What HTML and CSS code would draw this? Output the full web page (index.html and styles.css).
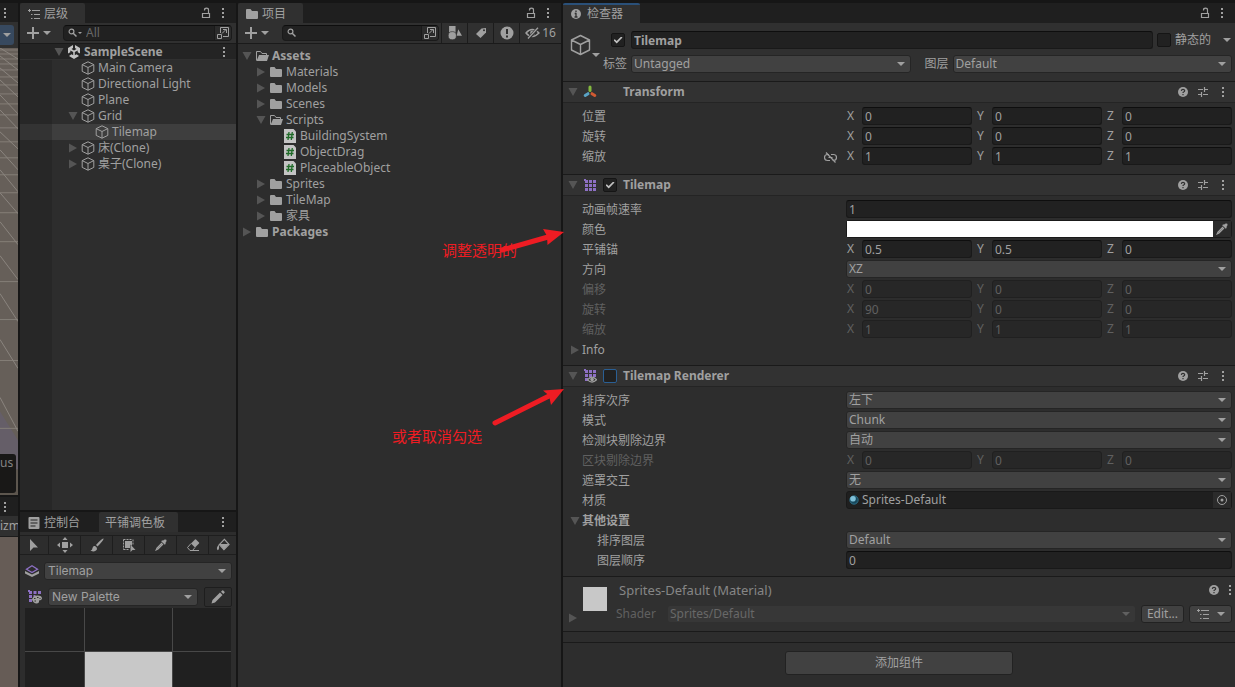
FILE: index.html
```html
<!DOCTYPE html>
<html lang="zh-CN">
<head>
<meta charset="utf-8">
<title>SampleScene</title>
<link rel="stylesheet" href="styles.css">
</head>
<body>
<svg class="defs" aria-hidden="true">
  <symbol id="kebab" viewBox="0 0 4 12"><path d="M1 1h2v2H1zM1 5h2v2H1zM1 9h2v2H1z" fill="currentColor"/></symbol>
  <symbol id="lock" viewBox="0 0 10 12"><path d="M1.5 6.5h7v4h-7zM3.500 3.500V3a2 1.800 0 0 1 4 0v3.500" fill="none" stroke="currentColor" stroke-width="1.200"/></symbol>
  <symbol id="list" viewBox="0 0 12 12"><path d="M4 2.500h8M6 6.500h6M6 10.500h6M3 6.500h1.500M3 10.500h1.500M0 2.500h3M1.500 1v3" fill="none" stroke="currentColor"/></symbol>
  <symbol id="down" viewBox="0 0 8 4"><path d="M0 0h8L4 4z" fill="currentColor"/></symbol>
  <symbol id="open" viewBox="0 0 10 10"><path d="M.5 1h9L5 9z" fill="#555"/></symbol>
  <symbol id="shut" viewBox="0 0 10 10"><path d="M1 .5v9L9 5z" fill="#555"/></symbol>
  <symbol id="plus" viewBox="0 0 12 12"><path d="M6 0v12M0 6h12" stroke="currentColor" stroke-width="2"/></symbol>
  <symbol id="search" viewBox="0 0 10 10"><circle cx="3.500" cy="3.500" r="2.400" fill="none" stroke="currentColor" stroke-width="1.200"/><path d="M5.200 5.200 8.500 8.500" stroke="currentColor" stroke-width="1.500"/></symbol>
  <symbol id="goto" viewBox="0 0 13 13"><path d="M3.500 7V1.500h8v9H6M.5 8.500h4v4h-4zM5 7.500l4-4M6 3.500h3.500V7" fill="none" stroke="currentColor"/></symbol>
  <symbol id="cube" viewBox="0 0 14 14"><path d="M7 .8 12.800 3.600v6.800L7 13.200 1.200 10.400V3.600zM1.200 3.600 7 6.500l5.800-2.900M7 6.500v6.700" fill="none" stroke="currentColor" stroke-linejoin="round"/></symbol>
  <symbol id="cube-big" viewBox="0 0 24 24"><path d="M11.500 2.500 20.500 7v10l-9 4.500L2.500 17V7zM2.500 7l9 4.500 9-4.500M11.500 11.500v10" fill="none" stroke="currentColor" stroke-width="1.400" stroke-linejoin="round"/></symbol>
  <symbol id="unity" viewBox="0 0 14 14"><path d="M6 0v3L4.500 4 7 5.500 9.500 4 8 3V0l5 3v5.500l-2.300-1.300V5.500L7.800 7v3.200l1.700-1L12 11l-5 3-5-3 2.500-1.800 1.700 1V7L3.300 5.500v1.700L1 8.500V3z" fill="#c4c4c4"/></symbol>
  <symbol id="folder" viewBox="0 0 14 14"><path d="M1 3q0-1 1-1h3.500l1.500 2h5q1 0 1 1v6q0 1-1 1H2q-1 0-1-1z" fill="currentColor"/></symbol>
  <symbol id="folder-open" viewBox="0 0 14 14"><path d="M1.500 11.500v-9h4l1.500 2h4.500V6" fill="none" stroke="currentColor"/><path d="M4 6h10l-2 6H1.500z" fill="currentColor"/></symbol>
  <symbol id="script" viewBox="0 0 14 14"><path d="M1 0h9.500L13 2.500V14H1z" fill="#c4c4c4"/><path d="M6 3 5 11M9.300 3l-1 8M3.500 5.500h7.500M3 8.500h7.500" stroke="#1f6b28" stroke-width="1.300"/></symbol>
  <symbol id="shapes" viewBox="0 0 13 13"><path d="M1 0h6v6H1zM9.500 3l3.500 6H8z" fill="currentColor"/><circle cx="4" cy="9" r="3.800" fill="currentColor" stroke="#2f2f2f" stroke-width=".6"/></symbol>
  <symbol id="tag" viewBox="0 0 12 12"><path d="M1 7 6.500 1.500 11 1v4.500L5.500 11z" fill="currentColor"/><circle cx="9" cy="3.300" r="1" fill="#2f2f2f"/></symbol>
  <symbol id="alert" viewBox="0 0 14 14"><circle cx="7" cy="7" r="6.500" fill="currentColor"/><path d="M7 3v5M7 9.500v2" stroke="#2f2f2f" stroke-width="2"/></symbol>
  <symbol id="eye-off" viewBox="0 0 15 12"><path d="M1 6q6-7 13 0-7 7-13 0z" fill="none" stroke="currentColor" stroke-width="1.400"/><circle cx="7.500" cy="6" r="2.400" fill="currentColor"/><path d="M3 12 13 1" stroke="#2f2f2f" stroke-width="3"/><path d="M3 11.500 13 .8" stroke="currentColor" stroke-width="1.300"/></symbol>
  <symbol id="info" viewBox="0 0 10 10"><circle cx="5" cy="5" r="5" fill="currentColor"/><path d="M5 1.500v1.700M5 4v4M3.700 4.500H5M3.500 8h3" stroke="#303030" stroke-width="1.300"/></symbol>
  <symbol id="help" viewBox="0 0 10 10"><circle cx="5" cy="5" r="5" fill="currentColor"/><path d="M3.300 3.900Q3.500 2.300 5 2.300T6.700 3.700Q6.700 4.500 5.600 5 5 5.300 5 6M5 7v1.300" fill="none" stroke="#303030" stroke-width="1.200"/></symbol>
  <symbol id="sliders" viewBox="0 0 10 10"><path d="M0 2.500h5M7 2.500h3M0 7.500h3M5 7.500h5M6.500 0v5M3.500 5v5" fill="none" stroke="currentColor" stroke-width="1.200"/></symbol>
  <symbol id="transform" viewBox="0 0 14 14"><g stroke-width="3" stroke-linecap="round"><path d="M7 2v3.500" stroke="#84b93f"/><path d="M5 8.700 2.200 10.500" stroke="#5aa3c4"/><path d="m9 8.700 2.800 1.800" stroke="#d05a32"/></g></symbol>
  <symbol id="tiles" viewBox="0 0 14 14"><path d="M2 2h3v3H2zM6 2h3v3H6zM10 2h3v3h-3zM2 6h3v3H2zM6 6h3v3H6zM10 6h3v3h-3zM2 10h3v3H2zM6 10h3v3H6zM10 10h3v3h-3zM1 1h2v2H1z" fill="#8d70c4"/></symbol>
  <symbol id="tiles-eye" viewBox="0 0 14 14"><path d="M2 1h3v3H2zM6 1h3v3H6zM10 1h3v3h-3zM2 5h3v3H2zM6 5h3v3H6zM10 5h3v3h-3zM2 9h3v3H2zM1 0h2v2H1z" fill="#8d70c4"/><path d="M4.500 10.800q4.500-5.500 9.200 0-4.700 4.500-9.200 0z" fill="#303030" stroke="#a0a0a0" stroke-width="1.200"/><circle cx="9.100" cy="10.600" r="1.800" fill="#a0a0a0"/></symbol>
  <symbol id="tiles-palette" viewBox="0 0 14 14"><path d="M1 1h3v3H1zM5.500 1h3v3h-3zM10 1h3v3h-3zM1 5h3v3H1zM1 9h3v3H1zM5.500 5h2v2h-2zM0 0h2v2H0z" fill="#8d70c4"/><path d="M4 9.500Q5 5.500 9.500 5.500T14 8.800Q13.500 10.500 11 10.500 11.500 13.500 8.500 13.500T4 9.500z" fill="#a0a0a0"/><path d="M6 8.500h1.500M9 7.500h1.500M11.500 8.500h1M6.500 11h1.500" stroke="#303030" stroke-width="1.200"/></symbol>
  <symbol id="unlink" viewBox="0 0 13 11"><path d="M5 2.500H3.500a3 3 0 0 0 0 6H6M7 2.500h2.500a3 3 0 0 1 0 6H8.500M4.500 5.500h4M2 .5 11.500 10.500" fill="none" stroke="currentColor" stroke-width="1.200"/></symbol>
  <symbol id="dropper" viewBox="0 0 12 12"><path d="M8 1.800Q9.500-.2 11.300.8 12 2.500 10.300 4l.5.800-1 .9-3.600-3.500 1-1z" fill="currentColor"/><path d="M7 4 2 9l-.8 1.900L3 10l5-5" fill="none" stroke="currentColor" stroke-width="1.200"/></symbol>
  <symbol id="target" viewBox="0 0 12 12"><circle cx="6" cy="6" r="4.500" fill="none" stroke="currentColor"/><circle cx="6" cy="6" r="1.500" fill="currentColor"/></symbol>
  <symbol id="ball" viewBox="0 0 10 10"><circle cx="5" cy="5" r="4.200" fill="#17485c" stroke="#347a95" stroke-width=".8"/><circle cx="4" cy="3.700" r="2.800" fill="#7fc0d8"/></symbol>
  <symbol id="console" viewBox="0 0 11 12"><path d="M1 0h9q1 0 1 1v10q0 1-1 1H1q-1 0-1-1V1q0-1 1-1z" fill="currentColor"/><path d="M2 3h7M2 6h7M2 9h5" stroke="#222"/></symbol>
  <symbol id="pointer" viewBox="0 0 14 14"><path d="M3 1v12l3.500-3.500H11z" fill="currentColor"/></symbol>
  <symbol id="move" viewBox="0 0 16 16"><path d="M5 5h6v6H5zM8 0l2.500 3h-5zM8 16l2.500-3h-5zM0 8l3-2.500v5zM16 8l-3-2.500v5z" fill="currentColor"/></symbol>
  <symbol id="brush" viewBox="0 0 14 14"><path d="M13.500.5Q12 0 6 7l1.500 1.500Q14 2 13.500.5zM5 8Q3 7.500 2.500 10q0 2-2 2.500 4 2 6-.5Q8 10 5 8z" fill="currentColor"/></symbol>
  <symbol id="box" viewBox="0 0 14 14"><path d="M1.500 1.500h9M1.500 1.500v10M11 1.500v6M1.500 11.500h6" fill="none" stroke="currentColor" stroke-dasharray="2 1"/><path d="M3 3h7v4.500H8V10H3zM8.500 6.500v7.500l2-2h3z" fill="currentColor"/></symbol>
  <symbol id="eraser" viewBox="0 0 14 14"><path d="M5 5.500 9 1.500q.5-.5 1 0L13 4.500q.5.5 0 1L9 9.500z" fill="currentColor"/><path d="m5 5.500-3.500 4L4 12.500h2.500L9 9.500M5 12.500h8" fill="none" stroke="currentColor"/></symbol>
  <symbol id="bucket" viewBox="0 0 15 14"><path d="M3.500 6.500 9 1l5 5.500L8.500 12z" fill="none" stroke="currentColor" stroke-width="1.200"/><path d="M3.500 6h10.500L8.500 12zM3 6.500Q-.5 11 2 12.500 4 12 3 6.500z" fill="currentColor"/></symbol>
  <symbol id="layers" viewBox="0 0 14 12"><path d="M0 6v2.500L7 12l7-3.500V6L7 9.500z" fill="#a0a0a0"/><path d="m7 .8 5.500 3.400L7 7.600 1.500 4.200z" fill="none" stroke="#8d70c4" stroke-width="1.300"/></symbol>
  <symbol id="pencil" viewBox="0 0 14 14"><path d="M.5 13.500 1.500 10 9 2.500 11.500 5 4 12.500zM10 1.700l1.200-1.200q.5-.5 1 0L13.500 1.800q.5.500 0 1L12.300 4z" fill="currentColor"/></symbol>
</svg>

<div class="editor">
  <section class="side" aria-label="Scene">
    <div class="side-tab"><svg class="i-kebab"><use href="#kebab"/></svg></div>
    <div class="side-tools"><button class="side-drop" aria-label="选项"><svg class="i-down"><use href="#down"/></svg></button></div>
    <div class="scene">
      <svg class="scene-art" viewBox="0 0 18 448" preserveAspectRatio="none">
        <path d="M0 364 18 393V448H0z" fill="#655e68"/>
        <path d="M0 422h18v26H0z" fill="#5d564e"/>
        <path d="M0 2h18M0 6h18M0 11h18M0 16h18M0 22h18M0 29h18M0 37h18M0 46h18M0 56h18M0 67h18M0 80h18M0 94h18M0 110h18M0 127h18M0 145h18M0 165h18M0 194h18M0 234h18M0 272h18M0 313h18M0 381h18" stroke="#857e77"/>
        <path d="M0 0 18 11M0 8 18 22M0 20l18 15M0 32l18 17M0 47l18 19M0 62l18 19M0 84l18 17M0 102l18 20M0 122l18 22M0 145l18 21M0 174l18 23M0 208l18 24M0 246l18 28M0 292l18 29M0 350l18 34" stroke="#8b857e"/>
      </svg>
      <div class="scene-tag">us</div>
    </div>
    <div class="side-tab side-tab-low"><svg class="i-kebab"><use href="#kebab"/></svg></div>
    <div class="side-tools side-gizmos">izm</div>
    <div class="game"></div>
  </section>

  <div class="column">
    <section class="panel hierarchy">
      <header class="tabs">
        <h2 class="tab tab-on"><svg class="i12"><use href="#list"/></svg>层级</h2>
        <span class="tabs-end"><svg class="i-lock"><use href="#lock"/></svg><svg class="i-kebab"><use href="#kebab"/></svg></span>
      </header>
      <div class="tools">
        <button class="add" aria-label="创建"><svg class="i12"><use href="#plus"/></svg><svg class="i-down"><use href="#down"/></svg></button>
        <label class="search"><svg class="i10"><use href="#search"/></svg><svg class="i-tiny"><use href="#down"/></svg><input type="text" placeholder="All" aria-label="搜索层级"><span class="goto"><svg class="i-goto"><use href="#goto"/></svg></span></label>
      </div>
      <ul class="tree">
        <li class="node scene-node"><svg class="fold"><use href="#open"/></svg><svg class="icon"><use href="#unity"/></svg>SampleScene<svg class="i-kebab node-end"><use href="#kebab"/></svg></li>
        <li class="node l1"><span class="fold"></span><svg class="icon"><use href="#cube"/></svg>Main Camera</li>
        <li class="node l1"><span class="fold"></span><svg class="icon"><use href="#cube"/></svg>Directional Light</li>
        <li class="node l1"><span class="fold"></span><svg class="icon"><use href="#cube"/></svg>Plane</li>
        <li class="node l1"><svg class="fold"><use href="#open"/></svg><svg class="icon"><use href="#cube"/></svg>Grid</li>
        <li class="node l2 selected"><span class="fold"></span><svg class="icon"><use href="#cube"/></svg>Tilemap</li>
        <li class="node l1"><svg class="fold"><use href="#shut"/></svg><svg class="icon"><use href="#cube"/></svg>床(Clone)</li>
        <li class="node l1"><svg class="fold"><use href="#shut"/></svg><svg class="icon"><use href="#cube"/></svg>桌子(Clone)</li>
      </ul>
    </section>

    <section class="panel palette">
      <header class="tabs">
        <h2 class="tab"><svg class="i12"><use href="#console"/></svg>控制台</h2>
        <h2 class="tab tab-on">平铺调色板</h2>
        <span class="tabs-end"><svg class="i-kebab"><use href="#kebab"/></svg></span>
      </header>
      <div class="brushes">
        <button aria-label="选择"><svg class="i14"><use href="#pointer"/></svg></button>
        <button aria-label="移动"><svg class="i16"><use href="#move"/></svg></button>
        <button aria-label="画笔"><svg class="i14"><use href="#brush"/></svg></button>
        <button aria-label="框选"><svg class="i14"><use href="#box"/></svg></button>
        <button aria-label="拾取"><svg class="i12"><use href="#dropper"/></svg></button>
        <button aria-label="擦除"><svg class="i14"><use href="#eraser"/></svg></button>
        <button aria-label="填充"><svg class="i14"><use href="#bucket"/></svg></button>
      </div>
      <div class="palette-row">
        <svg class="i14"><use href="#layers"/></svg>
        <span class="drop"><select aria-label="活动瓦片地图"><option>Tilemap</option></select></span>
      </div>
      <div class="palette-row palette-pick">
        <svg class="i14"><use href="#tiles-palette"/></svg>
        <span class="drop"><select aria-label="调色板"><option>New Palette</option></select></span>
        <button class="edit-palette" aria-label="编辑"><svg class="i14"><use href="#pencil"/></svg></button>
      </div>
      <div class="cells"><i></i><i></i><i></i><i></i><i class="cell-on"></i><i></i></div>
    </section>
  </div>

  <section class="panel project">
    <header class="tabs">
      <h2 class="tab tab-on"><svg class="i14"><use href="#folder"/></svg>项目</h2>
      <span class="tabs-end"><svg class="i-lock"><use href="#lock"/></svg><svg class="i-kebab"><use href="#kebab"/></svg></span>
    </header>
    <div class="tools">
      <button class="add" aria-label="创建"><svg class="i12"><use href="#plus"/></svg><svg class="i-down"><use href="#down"/></svg></button>
      <label class="search"><svg class="i10"><use href="#search"/></svg><input type="text" aria-label="搜索项目"><span class="goto"><svg class="i-goto"><use href="#goto"/></svg></span></label>
      <button class="tool" aria-label="按类型"><svg class="i14"><use href="#shapes"/></svg></button>
      <button class="tool" aria-label="按标签"><svg class="i12"><use href="#tag"/></svg></button>
      <button class="tool" aria-label="按日志"><svg class="i14"><use href="#alert"/></svg></button>
      <button class="tool tool-wide"><svg class="i-eye"><use href="#eye-off"/></svg>16</button>
    </div>
    <ul class="tree">
      <li class="node bold"><svg class="fold"><use href="#open"/></svg><svg class="icon"><use href="#folder-open"/></svg>Assets</li>
      <li class="node l1"><svg class="fold"><use href="#shut"/></svg><svg class="icon"><use href="#folder"/></svg>Materials</li>
      <li class="node l1"><svg class="fold"><use href="#shut"/></svg><svg class="icon"><use href="#folder"/></svg>Models</li>
      <li class="node l1"><svg class="fold"><use href="#shut"/></svg><svg class="icon"><use href="#folder"/></svg>Scenes</li>
      <li class="node l1"><svg class="fold"><use href="#open"/></svg><svg class="icon"><use href="#folder-open"/></svg>Scripts</li>
      <li class="node l2"><span class="fold"></span><svg class="icon"><use href="#script"/></svg>BuildingSystem</li>
      <li class="node l2"><span class="fold"></span><svg class="icon"><use href="#script"/></svg>ObjectDrag</li>
      <li class="node l2"><span class="fold"></span><svg class="icon"><use href="#script"/></svg>PlaceableObject</li>
      <li class="node l1"><svg class="fold"><use href="#shut"/></svg><svg class="icon"><use href="#folder"/></svg>Sprites</li>
      <li class="node l1"><svg class="fold"><use href="#shut"/></svg><svg class="icon"><use href="#folder"/></svg>TileMap</li>
      <li class="node l1"><svg class="fold"><use href="#shut"/></svg><svg class="icon"><use href="#folder"/></svg>家具</li>
      <li class="node bold"><svg class="fold"><use href="#shut"/></svg><svg class="icon"><use href="#folder"/></svg>Packages</li>
    </ul>
  </section>

  <section class="panel inspector">
    <header class="tabs">
      <h2 class="tab tab-on tab-focus"><svg class="i10"><use href="#info"/></svg>检查器</h2>
      <span class="tabs-end"><svg class="i-lock"><use href="#lock"/></svg><svg class="i-kebab"><use href="#kebab"/></svg></span>
    </header>

    <div class="object">
      <button class="object-icon" aria-label="图标"><svg class="i-cube"><use href="#cube-big"/></svg><svg class="i-down"><use href="#down"/></svg></button>
      <div class="object-fields">
        <div class="object-row">
          <span class="object-key"><input type="checkbox" checked aria-label="启用"></span>
          <input class="field bold" type="text" value="Tilemap" aria-label="名称">
          <label class="static"><input type="checkbox">静态的<svg class="i-down"><use href="#down"/></svg></label>
        </div>
        <div class="object-row">
          <label class="object-key" for="tag-pick">标签</label>
          <span class="drop"><select id="tag-pick"><option>Untagged</option></select></span>
          <label class="layer-key" for="layer-pick">图层</label>
          <span class="drop"><select id="layer-pick"><option>Default</option></select></span>
        </div>
      </div>
    </div>

    <section class="component">
      <header class="head"><svg class="fold"><use href="#open"/></svg><svg class="i14"><use href="#transform"/></svg><span class="head-check"></span><h3>Transform</h3><span class="head-end"><svg class="i10"><use href="#help"/></svg><svg class="i10"><use href="#sliders"/></svg><svg class="i-kebab"><use href="#kebab"/></svg></span></header>
      <div class="rows">
        <div class="row"><span>位置</span><div class="vec"><label>X<input class="field" value="0"></label><label>Y<input class="field" value="0"></label><label>Z<input class="field" value="0"></label></div></div>
        <div class="row"><span>旋转</span><div class="vec"><label>X<input class="field" value="0"></label><label>Y<input class="field" value="0"></label><label>Z<input class="field" value="0"></label></div></div>
        <div class="row"><span class="linked">缩放<svg class="i-link"><use href="#unlink"/></svg></span><div class="vec"><label>X<input class="field" value="1"></label><label>Y<input class="field" value="1"></label><label>Z<input class="field" value="1"></label></div></div>
      </div>
    </section>

    <section class="component">
      <header class="head"><svg class="fold"><use href="#open"/></svg><svg class="i14"><use href="#tiles"/></svg><span class="head-check"><input type="checkbox" checked aria-label="Tilemap"></span><h3>Tilemap</h3><span class="head-end"><svg class="i10"><use href="#help"/></svg><svg class="i10"><use href="#sliders"/></svg><svg class="i-kebab"><use href="#kebab"/></svg></span></header>
      <div class="rows rows-tight">
        <div class="row"><label for="rate">动画帧速率</label><input class="field" id="rate" value="1"></div>
        <div class="row"><span>颜色</span><div class="color"><button class="swatch" aria-label="颜色"></button><button class="pick" aria-label="吸管"><svg class="i12"><use href="#dropper"/></svg></button></div></div>
        <div class="row"><span>平铺锚</span><div class="vec"><label>X<input class="field" value="0.5"></label><label>Y<input class="field" value="0.5"></label><label>Z<input class="field" value="0"></label></div></div>
        <div class="row"><label for="dir">方向</label><span class="drop"><select id="dir"><option>XZ</option></select></span></div>
        <div class="row off"><span>偏移</span><div class="vec"><label>X<input class="field" value="0" disabled></label><label>Y<input class="field" value="0" disabled></label><label>Z<input class="field" value="0" disabled></label></div></div>
        <div class="row off"><span>旋转</span><div class="vec"><label>X<input class="field" value="90" disabled></label><label>Y<input class="field" value="0" disabled></label><label>Z<input class="field" value="0" disabled></label></div></div>
        <div class="row off"><span>缩放</span><div class="vec"><label>X<input class="field" value="1" disabled></label><label>Y<input class="field" value="1" disabled></label><label>Z<input class="field" value="1" disabled></label></div></div>
        <div class="group"><svg class="fold"><use href="#shut"/></svg>Info</div>
      </div>
    </section>

    <section class="component">
      <header class="head"><svg class="fold"><use href="#open"/></svg><svg class="i14"><use href="#tiles-eye"/></svg><span class="head-check"><input class="focus" type="checkbox" aria-label="Tilemap Renderer"></span><h3>Tilemap Renderer</h3><span class="head-end"><svg class="i10"><use href="#help"/></svg><svg class="i10"><use href="#sliders"/></svg><svg class="i-kebab"><use href="#kebab"/></svg></span></header>
      <div class="rows rows-tight">
        <div class="row"><label for="order">排序次序</label><span class="drop"><select id="order"><option>左下</option></select></span></div>
        <div class="row"><label for="mode">模式</label><span class="drop"><select id="mode"><option>Chunk</option></select></span></div>
        <div class="row"><label for="cull">检测块剔除边界</label><span class="drop"><select id="cull"><option>自动</option></select></span></div>
        <div class="row off"><span>区块剔除边界</span><div class="vec"><label>X<input class="field" value="0" disabled></label><label>Y<input class="field" value="0" disabled></label><label>Z<input class="field" value="0" disabled></label></div></div>
        <div class="row"><label for="mask">遮罩交互</label><span class="drop"><select id="mask"><option>无</option></select></span></div>
        <div class="row"><span>材质</span><div class="object-field"><svg class="i10"><use href="#ball"/></svg><span class="object-name">Sprites-Default</span><button class="pick" aria-label="选择材质"><svg class="i12"><use href="#target"/></svg></button></div></div>
        <div class="group bold"><svg class="fold"><use href="#open"/></svg>其他设置</div>
        <div class="row sub"><label for="slayer">排序图层</label><span class="drop"><select id="slayer"><option>Default</option></select></span></div>
        <div class="row sub"><label for="lorder">图层顺序</label><input class="field" id="lorder" value="0"></div>
      </div>
    </section>

    <section class="material">
      <svg class="fold"><use href="#shut"/></svg>
      <span class="preview"></span>
      <div class="material-main">
        <div class="material-title"><h3>Sprites-Default (Material)</h3><svg class="i10"><use href="#help"/></svg><svg class="i-kebab"><use href="#kebab"/></svg></div>
        <div class="material-row"><label for="shader">Shader</label><span class="drop drop-off"><select id="shader" disabled><option>Sprites/Default</option></select></span><button class="btn">Edit...</button><button class="btn btn-menu" aria-label="菜单"><svg class="i12"><use href="#list"/></svg><svg class="i-down"><use href="#down"/></svg></button></div>
      </div>
    </section>
    <div class="spacer"></div>
    <div class="add-area"><button class="btn btn-add">添加组件</button></div>
  </section>
</div>

<svg class="marks" aria-hidden="true">
  <g fill="#ee1c23" stroke="#ee1c23">
    <path d="M502 250 548 237" stroke-width="5" stroke-linecap="round"/><path d="M564 232 543 229l4 7 .5 9z" stroke="none"/>
    <path d="m495 423 54-27" stroke-width="5" stroke-linecap="round"/><path d="M564 389l-21 1.500 6 5 2 9.500z" stroke="none"/>
  </g>
</svg>
<p class="note note-color">调整透明的</p>
<p class="note note-check">或者取消勾选</p>
</body>
</html>
```
FILE: styles.css
```css
* { box-sizing: border-box; }
body {
  margin: 0;
  background: #161616;
  color: #a0a0a0;
  font: 12px/16px "Noto Sans", "Noto Sans CJK SC", sans-serif;
  overflow: hidden;
}
h2, h3, p, ul { margin: 0; padding: 0; }
h2, h3 { font-size: 12px; }
ul { list-style: none; }
svg { display: block; flex: none; }
button, input, select { font: inherit; color: inherit; margin: 0; padding: 0; border: 0; background: none; border-radius: 0; min-width: 0; }
input, select { outline: 0; }
.defs { position: absolute; width: 0; height: 0; }
.bold { font-weight: 700; }

.i10 { width: 10px; height: 10px; }
.i12 { width: 12px; height: 12px; }
.i14 { width: 14px; height: 14px; }
.i16 { width: 16px; height: 16px; }
.i-kebab { width: 4px; height: 12px; }
.i-lock { width: 10px; height: 12px; }
.i-down { width: 8px; height: 4px; }
.i-tiny { width: 4px; height: 2px; }
.i-goto { width: 13px; height: 13px; }
.i-eye { width: 15px; height: 12px; }
.i-link { width: 13px; height: 11px; }
.i-cube { width: 24px; height: 24px; }

.editor {
  display: grid;
  grid-template-columns: minmax(0, 18fr) minmax(0, 216fr) minmax(0, 323fr) minmax(0, 672fr);
  gap: 2px;
  min-height: 100vh;
  padding-top: 3px;
}

/* scene and game strips */
.side { display: flex; flex-direction: column; overflow: hidden; }
.side-tab { height: 19px; display: flex; align-items: center; justify-content: center; padding-right: 8px; background: #1f1f1f; }
.side-tools { height: 26px; background: #303030; padding: 3px 4px 0 0; }
.side-drop { width: 100%; height: 20px; background: #37495f; border-radius: 0 3px 3px 0; display: grid; place-items: center; }
.scene { flex: 448; background: #665f59; display: grid; overflow: hidden; }
.scene-art, .scene-tag { grid-area: 1 / 1; }
.scene-art { width: 100%; height: 100%; }
.scene-tag { align-self: end; height: 39px; margin: 0 2px 2px 0; padding-top: 1px; background: #191817; border-radius: 0 3px 3px 0; color: #848484; }
.side-tab-low { margin-top: 2px; }
.side-gizmos { height: 20px; padding: 2px 0 0; font-family: "Noto Sans", sans-serif; }
.game { flex: 150; background: #665c56; border-top: 1px solid #1c1c1c; }

/* panels */
.column { display: flex; flex-direction: column; gap: 2px; }
.panel { background: #2d2d2d; min-width: 0; }
.hierarchy { flex: 507; display: flex; flex-direction: column; }
.palette { flex: 175; display: flex; flex-direction: column; }
.tabs { display: flex; height: 20px; background: #1f1f1f; }
.tab { display: flex; align-items: center; gap: 4px; padding: 2px 17px 0 8px; font-weight: 400; border-radius: 2px 2px 0 0; }
.tab-on { background: #303030; }
.project .tab { padding-left: 7px; gap: 3px; }
.tab-focus { border-top: 2px solid #2a5079; padding-top: 0; gap: 6px; }
.palette .tab { padding-right: 13px; }
.palette .tab-on { padding-left: 6px; margin-left: 6px; }
.tabs-end { margin-left: auto; display: flex; align-items: center; gap: 10px; padding-right: 11px; }
.tools { display: flex; align-items: center; height: 21px; background: #303030; border-bottom: 1px solid #1a1a1a; }
.add { display: flex; align-items: center; gap: 4px; padding: 0 13px 0 7px; }
.hierarchy .add { padding-right: 12px; }
.search { flex: 1; display: flex; align-items: center; height: 16px; min-width: 0; background: #212121; border: 1px solid #1a1a1a; border-top-color: #0e0e0e; border-radius: 4px; padding-left: 4px; overflow: hidden; }
.search input { flex: 1; height: 14px; padding-left: 4px; }
.search input::placeholder { color: #686868; }
.hierarchy .search { margin-right: 4px; }
.goto { height: 14px; padding: 0 1px 0 2px; background: #2b2b2b; border-left: 1px solid #1a1a1a; }
.tool { height: 20px; width: 26px; border-left: 1px solid #1c1c1c; display: flex; align-items: center; justify-content: center; }
.search + .tool { margin-left: 2px; }
.tool-wide { width: 42px; gap: 2px; }

.node { display: flex; align-items: center; height: 16px; padding-left: 2px; white-space: nowrap; }
.l1 { padding-left: 16px; }
.l2 { padding-left: 30px; }
.fold { width: 10px; height: 10px; margin: 0 2px; flex: none; }
.icon { width: 14px; height: 14px; margin: 0 3px 0 1px; }
.project .tree { padding-top: 4px; }
.hierarchy .tree { flex: 1; background: linear-gradient(90deg, #272727 32px, #2d2d2d 32px); }
.hierarchy .node { padding-left: 32px; }
.hierarchy .l1 { padding-left: 46px; }
.hierarchy .l2 { padding-left: 60px; }
.hierarchy .scene-node { background: #242424; border-bottom: 1px solid #303030; font-weight: 700; }
.node-end { margin: 0 10px 0 auto; }
.selected { background: linear-gradient(90deg, #333 32px, #3e3e3e 32px); }

/* controls */
.field { height: 18px; width: 100%; background: #212121; border: 1px solid #191919; border-top-color: #0e0e0e; border-radius: 3px; padding: 1px 2px 0; }
.field:disabled { background: #272727; border-color: #202020; color: #606060; }
.drop { display: grid; align-items: center; position: relative; min-width: 0; }
.drop select { appearance: none; width: 100%; height: 18px; padding: 0 18px 0 2px; background: #414141; border: 1px solid #252525; border-radius: 3px; opacity: 1; line-height: 16px; }
.drop::after { content: ""; position: absolute; right: 6px; border: 4px solid transparent; border-top-color: #a0a0a0; border-bottom: 0; pointer-events: none; }
.drop-off { color: #686868; }
.drop-off select { background: #373737; border-color: #303030; }
.drop-off::after { border-top-color: #606060; }
input[type="checkbox"] { appearance: none; width: 14px; height: 14px; background: #212121; border: 1px solid #151515; border-radius: 2px; display: grid; place-items: center; flex: none; }
input[type="checkbox"]:checked::before { content: ""; width: 9px; height: 7px; background: #c0c0c0; clip-path: polygon(0 55%, 14% 38%, 35% 65%, 86% 0, 100% 14%, 36% 100%); }
input[type="checkbox"].focus { border-color: #2a5f94; }
.btn { height: 18px; background: #414141; border: 1px solid #222; border-radius: 3px; }

/* palette */
.brushes { display: grid; grid-template-columns: 29fr repeat(5, 32fr) 27fr; height: 20px; margin-top: 3px; border: solid #1e1e1e; border-width: 1px 0; }
.brushes button { display: grid; place-items: center; border-right: 1px solid #1e1e1e; }
.brushes button:last-child { border: 0; }
.palette-row { display: flex; align-items: center; gap: 5px; padding: 7px 4px 0 5px; font-family: Inter, "Noto Sans", sans-serif; }
.palette-row .drop { flex: 1; }
.palette-row select { padding-left: 3px; }
.palette-pick { padding: 7px 4px 0 8px; gap: 6px; }
.edit-palette { width: 28px; height: 20px; border: 1px solid #1e1e1e; border-radius: 2px; display: grid; place-items: center; }
.cells { flex: 1; display: grid; grid-template: 44fr 35fr / 60fr 88fr 58fr; margin: 1px 5px 0; background: #202020; }
.cells i { border: solid #484848; border-width: 0 1px 1px 0; }
.cells i:nth-child(3n) { border-right: 0; }
.cells i:nth-child(n+4) { border-bottom: 0; }
.cells .cell-on { background: #c8c8c8; }

/* inspector */
.object { display: flex; padding: 8px 3px 8px 6px; background: #303030; }
.object-icon { width: 30px; height: 26px; display: grid; grid-template-columns: 23px 7px; align-items: end; }
.object-fields { flex: 1; display: grid; gap: 6px; min-width: 0; }
.object-row { display: flex; align-items: center; height: 18px; }
.object-key { width: 32px; padding-left: 4px; flex: none; }
.object-row input[type="checkbox"] { margin-left: 8px; }
.object-row .field, .object-row .drop { flex: 1; }
.object-row .static { display: flex; align-items: center; gap: 4px; padding-right: 1px; }
.object-row .static input { margin-left: 4px; }
.static .i-down { margin-left: 8px; }
.layer-key { padding: 0 4px 0 14px; }
.component { border-top: 1px solid #1a1a1a; }
.head { display: flex; align-items: center; height: 21px; padding-left: 3px; background: #323232; border-bottom: 1px solid #242424; }
.head .i14 { margin: 0 6px 0 3px; }
.head-check { width: 20px; }
.head-end { display: flex; align-items: center; gap: 10px; margin-left: auto; padding-right: 10px; }
.head-end .i-kebab { margin-left: 3px; }
.rows { padding: 4px 3px 7px 19px; }
.rows-tight { padding-bottom: 5px; }
.row { display: grid; grid-template-columns: minmax(0, 264fr) minmax(0, 386fr); height: 20px; align-items: start; line-height: 18px; }
.row > label, .row > span:first-child { line-height: 20px; }
.sub label { padding-left: 15px; }
.off { color: #606060; }
.linked { display: flex; align-items: center; justify-content: space-between; padding-right: 9px; }
.vec { display: grid; grid-template-columns: repeat(3, minmax(0, 1fr)); gap: 4px; }
.vec label { display: grid; grid-template-columns: 15px minmax(0, 1fr); padding-left: 1px; }
.group { display: flex; align-items: center; height: 20px; margin-left: -14px; }
.color, .object-field { display: flex; height: 18px; background: #1f1f1f; border: 1px solid #191919; border-radius: 3px; align-items: center; }
.swatch { flex: 1; height: 16px; background: #fff; }
.pick { width: 18px; height: 16px; display: grid; place-items: center; background: #2b2b2b; }
.object-field { padding-left: 2px; gap: 3px; }
.object-name { flex: 1; }
.material { display: flex; background: #303030; border: solid #1a1a1a; border-width: 1px 0; padding: 5px 3px 8px; }
.material .fold { align-self: end; }
.preview { width: 24px; height: 24px; margin: 5px 9px 0 3px; background: #c8c8c8; }
.material-main { flex: 1; min-width: 0; }
.material-title { display: flex; align-items: center; gap: 9px; height: 16px; padding-left: 3px; }
.material-title h3 { font-size: 13px; font-weight: 400; color: #868686; margin-right: auto; }
.material-row { display: flex; align-items: center; gap: 5px; margin-top: 7px; }
.material-row label { width: 46px; color: #606060; }
.material-row .drop { flex: 1; }
.material-row .btn { width: 43px; }
.material-row .btn-menu { display: flex; align-items: center; justify-content: center; gap: 8px; }
.spacer { height: 11px; border-bottom: 1px solid #1a1a1a; }
.add-area { display: flex; justify-content: center; padding-top: 8px; }
.btn-add { width: 34%; height: 24px; }

/* annotations drawn over the editor */
.marks { position: absolute; top: 0; left: 0; width: 100%; height: 100%; pointer-events: none; }
.note { position: absolute; color: #ee1c23; font-size: 15px; line-height: 20px; }
.note-color { left: 442px; top: 240px; }
.note-check { left: 392px; top: 426px; }
```
